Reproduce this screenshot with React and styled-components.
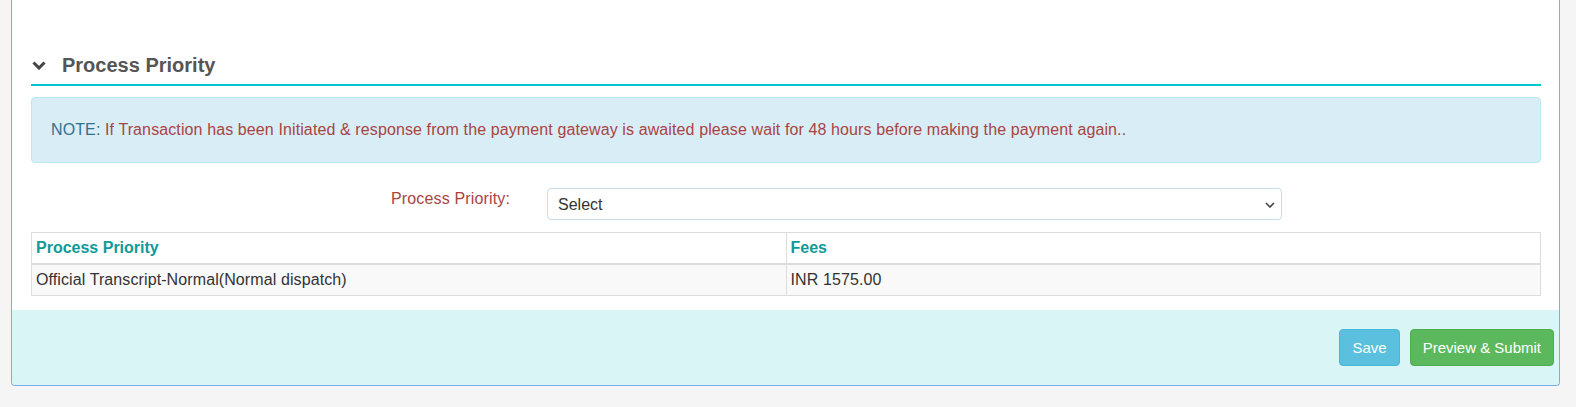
import React from 'react';
import styled, { createGlobalStyle } from 'styled-components';

const GlobalStyle = createGlobalStyle`
  body{
    margin:0;
    background:#f5f5f5;
    font-family:"Liberation Sans", Arial, sans-serif;
    color:#333;
  }
`;

const App = () =>{

  return (
    <>
      <GlobalStyle />
      <Panel>
        <Body>
          <SectionHead>
            <svg width="14" height="9" viewBox="0 0 14 9">
              <path d="M1.5 1.5 L7 7 L12.5 1.5" fill="none" stroke="#444" strokeWidth="3" />
            </svg>
            <span>Process Priority</span>
          </SectionHead>

          <Alert>
            <b>NOTE:</b> If Transaction has been Initiated &amp; response from the payment gateway is awaited please wait for 48 hours before making the payment again..
          </Alert>

          <FormRow>
            <Label>Process Priority:</Label>
            <SelectWrap>
              <select defaultValue="">
                <option value="">Select</option>
                <option value="normal">Official Transcript-Normal(Normal dispatch)</option>
              </select>
              <svg width="10" height="6" viewBox="0 0 10 6">
                <path d="M1 1 L5 5 L9 1" fill="none" stroke="#444" strokeWidth="1.6" />
              </svg>
            </SelectWrap>
          </FormRow>

          <Table>
            <thead>
              <tr>
                <th>Process Priority</th>
                <th>Fees</th>
              </tr>
            </thead>
            <tbody>
              <tr>
                <td>Official Transcript-Normal(Normal dispatch)</td>
                <td>INR 1575.00</td>
              </tr>
            </tbody>
          </Table>
        </Body>

        <Footer>
          <Button color="#5bc0de" border="#46b8da">Save</Button>
          <Button color="#5cb85c" border="#4cae4c">Preview &amp; Submit</Button>
        </Footer>
      </Panel>
    </>
  )
}

export default App;

const Panel = styled.div`
  margin-left:11px;
  width:1549px;
  box-sizing:border-box;
  background:#fff;
  border:1px solid #7aaee8;
  border-top:0;
  border-radius:0 0 4px 4px;
`;

const Body = styled.div`
  padding:51px 18px 14px 19px;
`;

const SectionHead = styled.div`
  display:flex;
  align-items:center;
  gap:16px;
  padding:0 0 5px 1px;
  border-bottom:2px solid #00c5cd;
  font-size:20px;
  line-height:28px;
  font-weight:bold;
  color:#555;

  svg{
    margin-top:1px;
  }
`;

const Alert = styled.div`
  margin-top:11px;
  padding:21px 19px;
  background:#d9edf7;
  border:1px solid #bce8f1;
  border-radius:4px;
  font-size:16px;
  line-height:22px;
  letter-spacing:0.11px;
  color:#a94442;

  b{
    font-weight:normal;
    color:#31708f;
  }
`;

const FormRow = styled.div`
  display:flex;
  align-items:flex-start;
  gap:37px;
  margin-top:25px;
`;

const Label = styled.label`
  width:479px;
  text-align:right;
  font-size:16px;
  line-height:22px;
  letter-spacing:0.15px;
  color:#a94442;
`;

const SelectWrap = styled.div`
  position:relative;
  width:735px;

  select{
    width:100%;
    height:32px;
    box-sizing:border-box;
    appearance:none;
    padding:0 30px 0 10px;
    border:1px solid #c6dbec;
    border-radius:4px;
    background:#fff;
    font-family:inherit;
    font-size:16px;
    color:#333;
  }

  svg{
    position:absolute;
    right:7px;
    top:14px;
    pointer-events:none;
  }
`;

const Table = styled.table`
  width:100%;
  margin-top:12px;
  border-collapse:collapse;
  table-layout:fixed;
  font-size:16px;
  line-height:22px;
  border:1px solid #ddd;

  th, td{
    width:50%;
    padding:4px 4px;
    text-align:left;
    border:1px solid #ddd;
  }

  th{
    color:#0e9a9a;
    font-weight:bold;
    border-bottom:2px solid #ddd;
  }

  td{
    background:#f9f9f9;
    color:#333;
    letter-spacing:0.1px;
  }
`;

const Footer = styled.div`
  display:flex;
  justify-content:flex-end;
  gap:10px;
  padding:19px 5px 19px 0;
  background:#d9f5f5;
  border-radius:0 0 4px 4px;
`;

const Button = styled.button`
  height:37px;
  padding:0 12px;
  border:1px solid ${props => props.border};
  border-radius:4px;
  background:${props => props.color};
  color:#fff;
  font-family:inherit;
  font-size:15px;
  cursor:pointer;
`;
